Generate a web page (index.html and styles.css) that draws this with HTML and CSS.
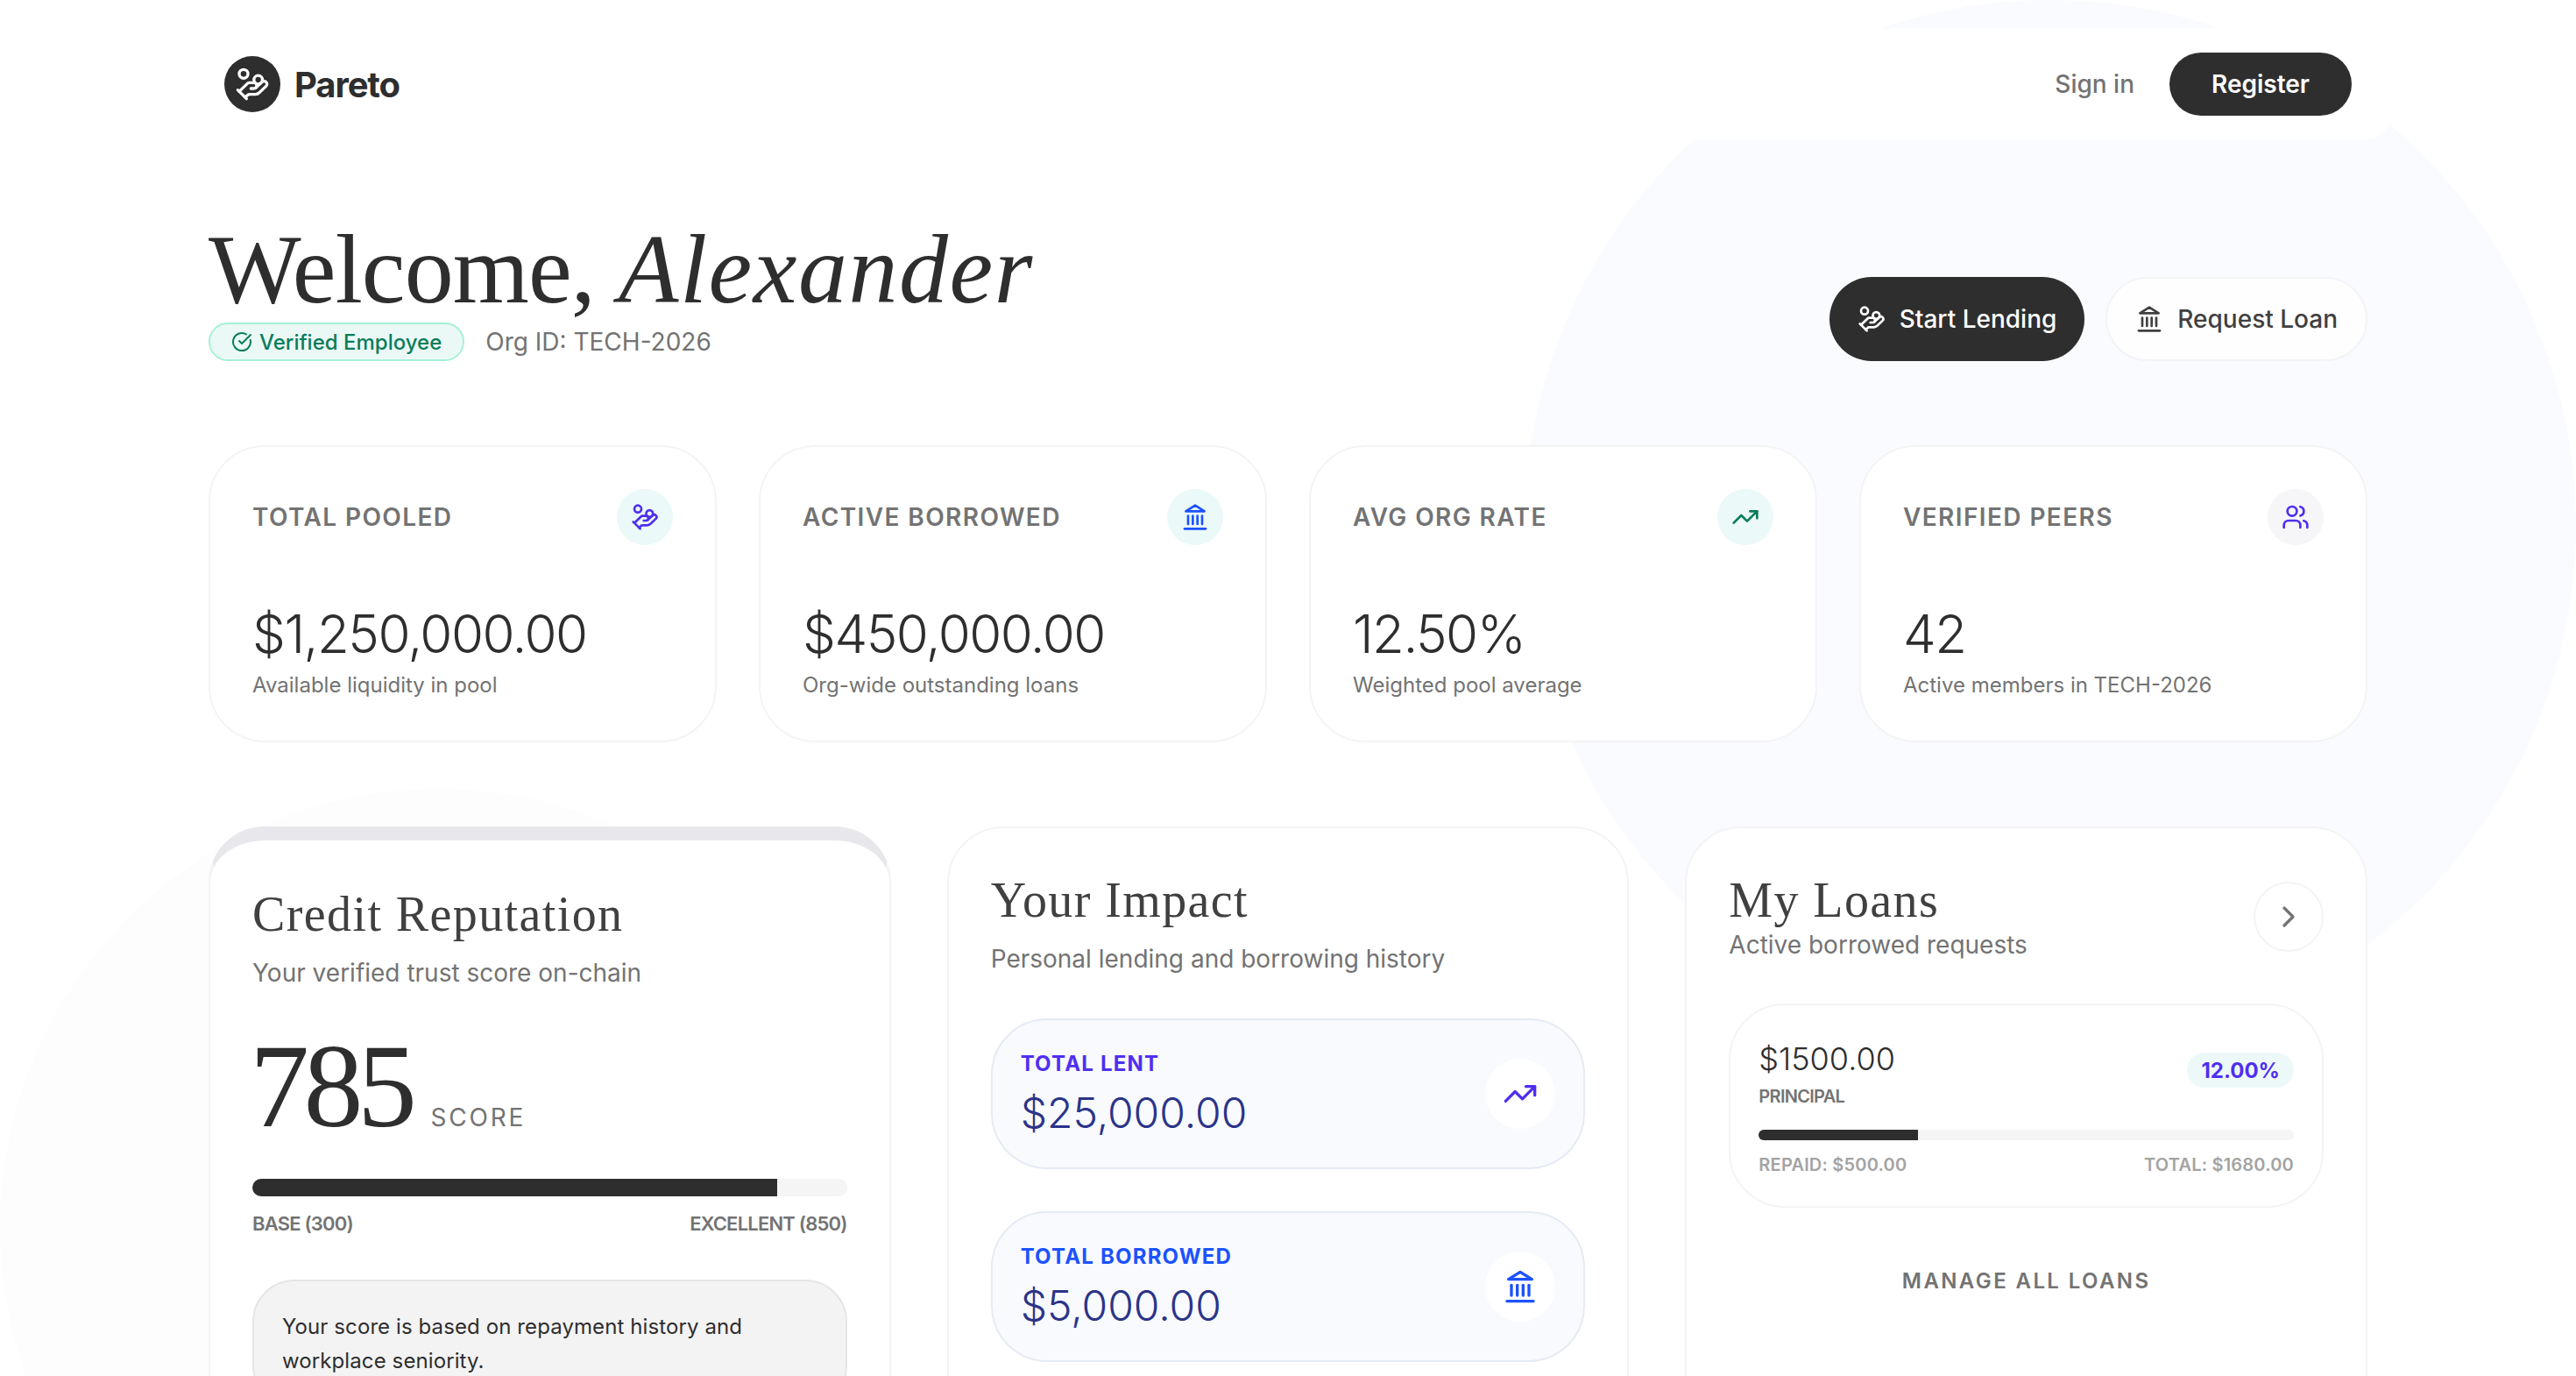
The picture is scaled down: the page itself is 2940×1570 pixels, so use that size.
FILE: index.html
```html
<!DOCTYPE html>
<html lang="en">
<head>
<meta charset="utf-8">
<title>Pareto</title>
<link rel="stylesheet" href="styles.css">
</head>
<body>
<svg class="sprite" aria-hidden="true">
  <symbol id="i-hand" viewBox="0 0 24 24"><path d="M11 15h2a2 2 0 1 0 0-4h-3c-.6 0-1.1.2-1.4.6L3 17"/><path d="m7 21 1.6-1.4c.3-.4.8-.6 1.4-.6h4c1.1 0 2.1-.4 2.8-1.2l4.6-4.4a2 2 0 0 0-2.75-2.91l-4.2 3.9"/><path d="m2 16 6 6"/><circle cx="16" cy="9" r="2.9"/><circle cx="6" cy="5" r="3"/></symbol>
  <symbol id="i-bank" viewBox="0 0 24 24"><path d="M3 22h18"/><path d="M6 18v-7"/><path d="M10 18v-7"/><path d="M14 18v-7"/><path d="M18 18v-7"/><path d="M12 2l8 5H4z"/></symbol>
  <symbol id="i-trend" viewBox="0 0 24 24"><path d="M22 7l-8.5 8.500-5-5L2 17"/><path d="M16 7h6v6"/></symbol>
  <symbol id="i-users" viewBox="0 0 24 24"><path d="M16 21v-2a4 4 0 0 0-4-4H6a4 4 0 0 0-4 4v2"/><circle cx="9" cy="7" r="4"/><path d="M22 21v-2a4 4 0 0 0-3-3.870"/><path d="M16 3.130a4 4 0 0 1 0 7.750"/></symbol>
  <symbol id="i-check" viewBox="0 0 24 24"><path d="M21.801 10A10 10 0 1 1 17 3.335"/><path d="m9 11 3 3L22 4"/></symbol>
  <symbol id="i-chev" viewBox="0 0 24 24"><path d="m9 18 6-6-6-6"/></symbol>
</svg>
<div class="blob blob-right"></div>
<div class="blob blob-left"></div>
<div class="page">
  <header class="topbar">
    <div class="brand">
      <span class="brand-mark"><svg class="icon icon-40"><use href="#i-hand"/></svg></span>
      <span class="brand-name">Pareto</span>
    </div>
    <nav class="nav">
      <a class="nav-link">Sign in</a>
      <a class="nav-cta">Register</a>
    </nav>
  </header>
  <main class="main">
    <section class="hero">
      <div>
        <h1 class="hero-title">Welcome, <em>Alexander</em></h1>
        <div class="hero-meta">
          <span class="badge"><svg class="icon icon-24"><use href="#i-check"/></svg>Verified Employee</span>
          <span class="org">Org ID: TECH-2026</span>
        </div>
      </div>
      <div class="hero-actions">
        <a class="btn btn-dark"><svg class="icon icon-32"><use href="#i-hand"/></svg>Start Lending</a>
        <a class="btn btn-light"><svg class="icon icon-32"><use href="#i-bank"/></svg>Request Loan</a>
      </div>
    </section>

    <section class="stats">
      <article class="stat">
        <div class="stat-top"><span class="stat-label">TOTAL POOLED</span><span class="stat-icon mint violet"><svg class="icon icon-32"><use href="#i-hand"/></svg></span></div>
        <div class="stat-value">$1,250,000.00</div>
        <div class="stat-sub">Available liquidity in pool</div>
      </article>
      <article class="stat">
        <div class="stat-top"><span class="stat-label">ACTIVE BORROWED</span><span class="stat-icon mint blue"><svg class="icon icon-32"><use href="#i-bank"/></svg></span></div>
        <div class="stat-value">$450,000.00</div>
        <div class="stat-sub">Org-wide outstanding loans</div>
      </article>
      <article class="stat">
        <div class="stat-top"><span class="stat-label">AVG ORG RATE</span><span class="stat-icon mint green"><svg class="icon icon-32"><use href="#i-trend"/></svg></span></div>
        <div class="stat-value">12.50%</div>
        <div class="stat-sub">Weighted pool average</div>
      </article>
      <article class="stat">
        <div class="stat-top"><span class="stat-label">VERIFIED PEERS</span><span class="stat-icon grey violet"><svg class="icon icon-32"><use href="#i-users"/></svg></span></div>
        <div class="stat-value">42</div>
        <div class="stat-sub">Active members in TECH-2026</div>
      </article>
    </section>

    <section class="panels">
      <article class="panel panel-credit">
        <h2 class="panel-title">Credit Reputation</h2>
        <p class="panel-sub credit-sub">Your verified trust score on-chain</p>
        <div class="score"><span class="score-num">785</span><span class="score-label">SCORE</span></div>
        <div class="track track-lg"><div class="fill" style="width:88.2%"></div></div>
        <div class="track-labels"><span>BASE (300)</span><span>EXCELLENT (850)</span></div>
        <div class="note">Your score is based on repayment history and workplace seniority.</div>
      </article>

      <article class="panel">
        <h2 class="panel-title">Your Impact</h2>
        <p class="panel-sub impact-sub">Personal lending and borrowing history</p>
        <div class="impact-list">
          <div class="impact">
            <div>
              <div class="impact-label violet">TOTAL LENT</div>
              <div class="impact-value">$25,000.00</div>
            </div>
            <span class="impact-icon violet"><svg class="icon icon-40"><use href="#i-trend"/></svg></span>
          </div>
          <div class="impact">
            <div>
              <div class="impact-label blue">TOTAL BORROWED</div>
              <div class="impact-value">$5,000.00</div>
            </div>
            <span class="impact-icon blue"><svg class="icon icon-40"><use href="#i-bank"/></svg></span>
          </div>
        </div>
      </article>

      <article class="panel">
        <div class="loans-head">
          <div>
            <h2 class="panel-title loans-title">My Loans</h2>
            <p class="panel-sub">Active borrowed requests</p>
          </div>
          <span class="round-btn"><svg class="icon icon-40"><use href="#i-chev"/></svg></span>
        </div>
        <div class="loan">
          <div class="loan-top">
            <div>
              <div class="loan-amount">$1500.00</div>
              <div class="loan-cap">PRINCIPAL</div>
            </div>
            <span class="rate">12.00%</span>
          </div>
          <div class="track track-sm"><div class="fill" style="width:29.76%"></div></div>
          <div class="loan-foot"><span>REPAID: $500.00</span><span>TOTAL: $1680.00</span></div>
        </div>
        <div class="manage">MANAGE ALL LOANS</div>
      </article>
    </section>
  </main>
</div>
</body>
</html>
```
FILE: styles.css
```css
* { box-sizing: border-box; }
html, body { margin: 0; height: 100%; }
body {
  position: relative;
  height: 100vh;
  overflow: hidden;
  background: #fff;
  color: #2e2e2e;
  font-family: Inter, "Liberation Sans", sans-serif;
}
h1, h2, p { margin: 0; }
.sprite { display: none; }
.icon { display: block; fill: none; stroke: currentColor; stroke-width: 2; stroke-linecap: round; stroke-linejoin: round; flex: none; }
.icon-24 { width: 24px; height: 24px; }
.icon-32 { width: 32px; height: 32px; }
.icon-40 { width: 40px; height: 40px; }
.violet { color: #4f2ff0; }
.blue { color: #1c52ff; }
.green { color: #0a7d5a; }

.blob { position: absolute; border-radius: 50%; }
.blob-right { top: 0; right: 0; width: 1200px; height: 1200px; background: #fafbff; }
.blob-left { top: 900px; left: 0; width: 1000px; height: 1000px; background: #fdfdfe; }

.page { position: relative; padding: 32px 210px 0; }
.topbar {
  display: flex;
  align-items: center;
  justify-content: space-between;
  height: 128px;
  padding: 0 46px;
  background: #fff;
  border-radius: 0 0 32px 32px;
}
.brand { display: flex; align-items: center; gap: 16px; }
.brand-mark { display: flex; align-items: center; justify-content: center; width: 64px; height: 64px; border-radius: 50%; background: #2e2e2e; color: #fff; }
.brand-name { font-size: 40px; font-weight: 700; letter-spacing: -1.1px; }
.nav { display: flex; align-items: center; gap: 40px; }
.nav-link { font-size: 28px; font-weight: 500; color: #737373; }
.nav-cta { display: flex; align-items: center; height: 72px; padding: 0 48px; border-radius: 36px; background: #2e2e2e; color: #fff; font-size: 28px; font-weight: 600; }

.main { padding: 0 28px; }
.hero { display: flex; justify-content: space-between; align-items: flex-end; padding-top: 91px; margin-bottom: 96px; }
.hero-title { font-family: "Liberation Serif", serif; font-size: 112px; font-weight: 400; line-height: 1; letter-spacing: -.9px; }
.hero-title em { font-style: italic; letter-spacing: 1.5px; }
.hero-meta { display: flex; align-items: center; gap: 24px; margin-top: 5px; }
.badge { display: flex; align-items: center; gap: 8px; height: 44px; padding: 0 24px; border: 2px solid #a7f0d4; border-radius: 22px; background: #ebf9f6; color: #0a7d5a; font-size: 24px; font-weight: 500; }
.org { font-size: 28px; color: #737373; }
.hero-actions { display: flex; gap: 24px; }
.btn { display: flex; align-items: center; gap: 16px; height: 96px; padding: 0 32px; border-radius: 48px; font-size: 28px; font-weight: 500; }
.btn-dark { background: #2e2e2e; color: #fff; }
.btn-light { background: rgba(255,255,255,.8); border: 2px solid #f3f4f6; color: #404040; }

.stats { display: grid; grid-template-columns: repeat(4, 1fr); gap: 48px; margin-bottom: 96px; }
.stat { height: 339px; padding: 48px; background: rgba(255,255,255,.85); border: 2px solid #f4f4f5; border-radius: 64px; }
.stat-top { display: flex; align-items: center; justify-content: space-between; margin-bottom: 65px; }
.stat-label { font-size: 28px; font-weight: 600; letter-spacing: 1.4px; color: #737373; }
.stat-icon { display: flex; align-items: center; justify-content: center; width: 64px; height: 64px; border-radius: 50%; }
.mint { background: #ebf9f8; }
.grey { background: #f6f6f8; }
.stat-value { font-size: 60px; font-weight: 300; line-height: 72px; letter-spacing: -1.5px; }
.stat-sub { margin-top: 5px; font-size: 24px; line-height: 36px; color: #737373; }

.panels { display: grid; grid-template-columns: repeat(3, 1fr); gap: 64px; }
.panel { min-height: 1000px; padding: 48px; background: rgba(255,255,255,.85); border: 2px solid #f4f4f5; border-radius: 64px; }
.panel-credit { border-top: 16px solid #e8e8ec; padding-top: 50px; }
.panel-title { font-family: "Liberation Serif", serif; font-size: 56px; font-weight: 400; line-height: 68px; letter-spacing: 1.4px; color: #404040; }
.panel-sub { font-size: 28px; line-height: 42px; color: #737373; }
.credit-sub { margin-top: 12px; }
.impact-sub { margin-top: 12px; }
.loans-title { margin-bottom: -4px; }

.score { display: flex; align-items: baseline; gap: 22px; margin-top: 40px; margin-left: -3px; }
.score-num { font-family: "Liberation Serif", serif; font-size: 136px; line-height: 1; letter-spacing: -6.5px; }
.score-label { font-size: 28px; letter-spacing: 2.8px; color: #737373; }
.track { overflow: hidden; background: #f5f5f5; }
.track-lg { height: 20px; margin-top: 38px; border-radius: 10px; }
.track-sm { height: 12px; margin-top: 23px; border-radius: 6px; }
.fill { height: 100%; background: #2e2e2e; }
.track-labels { display: flex; justify-content: space-between; margin-top: 18px; font-size: 22px; font-weight: 600; letter-spacing: -.8px; color: #737373; }
.note { margin-top: 51px; padding: 32px; background: #f3f3f4; border: 2px solid #e5e5e7; border-radius: 48px; font-size: 24px; line-height: 39px; letter-spacing: .1px; }

.impact-list { display: flex; flex-direction: column; gap: 48px; margin-top: 47px; }
.impact { display: flex; align-items: center; justify-content: space-between; height: 172px; padding: 0 32px; background: #f8fafe; border: 2px solid #e6eaf3; border-radius: 64px; }
.impact-label { font-size: 24px; font-weight: 700; letter-spacing: 1.2px; line-height: 32px; }
.impact-value { margin-top: 11px; font-size: 48px; font-weight: 300; line-height: 58px; color: #2b3488; }
.impact-icon { display: flex; align-items: center; justify-content: center; width: 80px; height: 80px; border-radius: 50%; background: #fff; }

.loans-head { display: flex; align-items: center; justify-content: space-between; }
.round-btn { display: flex; align-items: center; justify-content: center; width: 80px; height: 80px; border: 2px solid #f3f4f6; border-radius: 50%; color: #737373; }
.loan { margin-top: 46px; height: 233px; padding: 38px 32px 0; border: 2px solid #f4f4f5; border-radius: 64px; background: rgba(255,255,255,.8); }
.loan-top { display: flex; align-items: flex-start; justify-content: space-between; }
.loan-amount { font-size: 36px; font-weight: 300; line-height: 46px; }
.loan-cap { font-size: 20px; font-weight: 600; letter-spacing: -.7px; color: #737373; line-height: 28px; margin-top: 6px; }
.rate { display: flex; align-items: center; height: 40px; margin-top: 16px; padding: 0 16px; border-radius: 20px; background: #edf9f9; color: #4f2ff0; font-size: 24px; font-weight: 700; }
.loan-foot { display: flex; justify-content: space-between; margin-top: 16px; font-size: 20px; font-weight: 600; letter-spacing: .2px; color: #a3a3a3; }
.track-sm { margin-top: 24px; }
.manage { margin-top: 69px; text-align: center; font-size: 24px; font-weight: 600; letter-spacing: 2.4px; color: #737373; }
```
